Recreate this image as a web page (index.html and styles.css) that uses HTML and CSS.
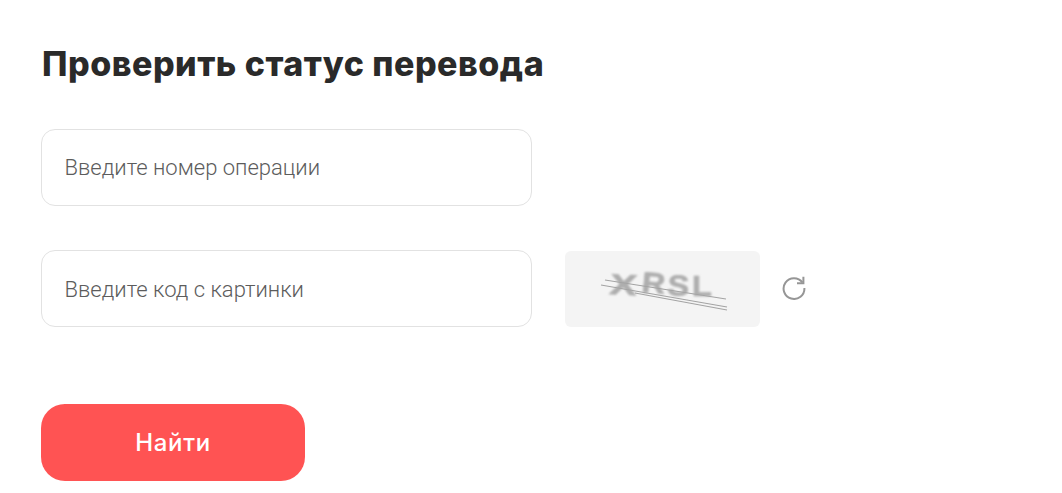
FILE: index.html
```html
<!DOCTYPE html>
<html lang="en">
<head>
    <meta charset="UTF-8">
    <meta name="viewport" content="width=device-width, initial-scale=1.0">
    <title>Проверить статус перевода</title>
    <link rel="stylesheet" href="styles.css">
</head>
<body>
    <form class="container">
        <h1>Проверить статус перевода</h1>
        <div class="row">
            <input class="field" type="text" placeholder="Введите номер операции">
        </div>
        <div class="row">
            <input class="field field-code" type="text" placeholder="Введите код с картинки">
            <div class="captcha">
                <svg width="195" height="76" viewBox="0 0 195 76">
                    <defs>
                        <filter id="soft"><feGaussianBlur stdDeviation="0.9"/></filter>
                        <filter id="soft-line"><feGaussianBlur stdDeviation="0.45"/></filter>
                    </defs>
                    <g filter="url(#soft)" fill="#aeaeae" stroke="#aeaeae" stroke-width="0.7">
                        <text class="captcha-text" transform="translate(44 43) scale(1.4 1) rotate(4)">X</text>
                        <text class="captcha-text" transform="translate(76 41) scale(1.12 1) rotate(5)">R</text>
                        <text class="captcha-text" transform="translate(102 44) scale(1.12 1) rotate(3)">S</text>
                        <text class="captcha-text" transform="translate(127 45) scale(1.12 1)">L</text>
                    </g>
                    <g filter="url(#soft-line)" stroke="#a4a4a4" stroke-width="1.2" fill="none">
                        <path d="M40 29 L161 48"/>
                        <path d="M36 34 L162 56"/>
                        <path d="M70 42 L162 59"/>
                    </g>
                </svg>
            </div>
            <button class="refresh" type="button" aria-label="Обновить">
                <svg width="24" height="24" viewBox="0 0 24 24" fill="none" stroke="#969696" stroke-width="2">
                    <path d="M20.4 6.4 A10.4 10.4 0 1 0 22.4 12"/>
                    <path d="M21.4 0.8 V7.2 H15"/>
                </svg>
            </button>
        </div>
        <button class="submit" type="button">Найти</button>
    </form>
</body>
</html>
```

FILE: styles.css
```css
body {
    margin: 0;
    background: #fff;
    font-family: 'Roboto', Arial, sans-serif;
}

.container {
    padding: 44px 0 0 41px;
}

h1 {
    margin: 0 0 45px 1px;
    font-family: 'Inter', Arial, sans-serif;
    font-size: 34px;
    font-weight: 800;
    line-height: 40px;
    letter-spacing: 0.5px;
    color: #2a2a2a;
}

.row {
    display: flex;
    align-items: center;
    margin-bottom: 44px;
}

.field {
    box-sizing: border-box;
    width: 491px;
    height: 77px;
    padding: 0 22.5px;
    border: 1px solid #e2e2e2;
    border-radius: 14px;
    background: #fff;
    font-family: 'Roboto', Arial, sans-serif;
    font-size: 22px;
    font-weight: 300;
    color: #333;
    outline: none;
}

.field-code {
    padding-top: 2px;
}

.field::placeholder {
    color: #5c5c5c;
    opacity: 1;
}

.captcha {
    width: 195px;
    height: 76px;
    margin-left: 33px;
    border-radius: 6px;
    background: #f4f4f4;
}

.captcha svg {
    display: block;
}

.captcha-text {
    font-family: 'Liberation Sans', Arial, sans-serif;
    font-size: 29px;
    font-weight: 700;
}

.refresh {
    display: flex;
    margin: 0 0 2px 22px;
    padding: 0;
    border: none;
    background: none;
    cursor: pointer;
}

.submit {
    display: block;
    width: 264px;
    height: 77px;
    margin-top: 77px;
    border: none;
    border-radius: 24px;
    background: #ff5353;
    font-family: 'Inter', Arial, sans-serif;
    font-size: 24px;
    font-weight: 500;
    letter-spacing: 0.7px;
    color: #fff;
    cursor: pointer;
}
```
